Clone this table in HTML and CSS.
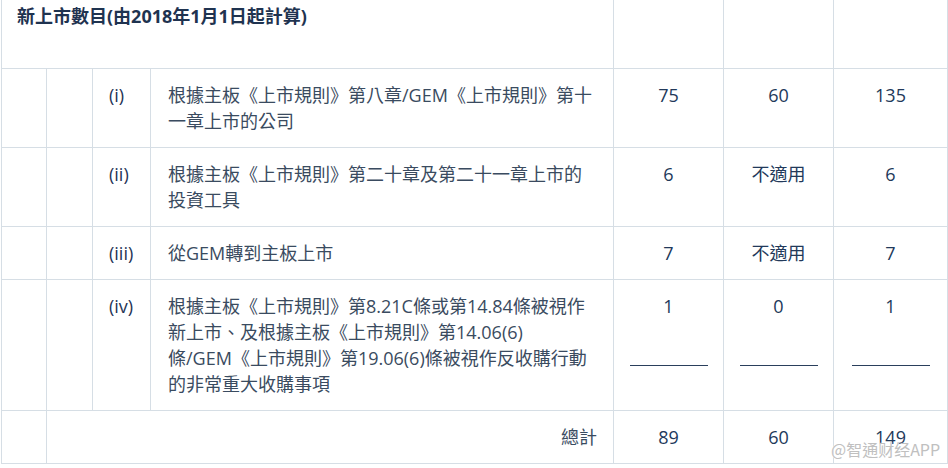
FILE: index.html
```html
<!DOCTYPE html>
<html lang="zh-Hant">
<head>
<meta charset="utf-8">
<title>新上市數目</title>
<link rel="stylesheet" href="styles.css">
</head>
<body>
<div class="page">
  <div class="grid">
    <div class="cell title">新上市數目(由2018年1月1日起計算)</div>
    <div class="cell"></div>
    <div class="cell"></div>
    <div class="cell"></div>

    <div class="cell"></div>
    <div class="cell"></div>
    <div class="cell label">(i)</div>
    <div class="cell desc">根據主板《上市規則》第八章/GEM《上市規則》第十<br>一章上市的公司</div>
    <div class="cell num">75</div>
    <div class="cell num">60</div>
    <div class="cell num">135</div>

    <div class="cell"></div>
    <div class="cell"></div>
    <div class="cell label">(ii)</div>
    <div class="cell desc">根據主板《上市規則》第二十章及第二十一章上市的<br>投資工具</div>
    <div class="cell num">6</div>
    <div class="cell num">不適用</div>
    <div class="cell num">6</div>

    <div class="cell"></div>
    <div class="cell"></div>
    <div class="cell label">(iii)</div>
    <div class="cell desc">從GEM轉到主板上市</div>
    <div class="cell num">7</div>
    <div class="cell num">不適用</div>
    <div class="cell num">7</div>

    <div class="cell"></div>
    <div class="cell"></div>
    <div class="cell label">(iv)</div>
    <div class="cell desc">根據主板《上市規則》第8.21C條或第14.84條被視作<br>新上市、及根據主板《上市規則》第14.06(6)<br>條/GEM《上市規則》第19.06(6)條被視作反收購行動<br>的非常重大收購事項</div>
    <div class="cell num">1<div class="rule"></div></div>
    <div class="cell num">0<div class="rule"></div></div>
    <div class="cell num">1<div class="rule"></div></div>

    <div class="cell"></div>
    <div class="cell total-label">總計</div>
    <div class="cell num">89</div>
    <div class="cell num">60</div>
    <div class="cell num">149</div>
  </div>
  <div class="watermark">@智通财经APP</div>
</div>
</body>
</html>
```

FILE: styles.css
```css
html, body {
  margin: 0;
  padding: 0;
  background: #ffffff;
}

.page {
  position: relative;
  width: 948px;
  height: 468px;
  overflow: hidden;
  font-family: "Open Sans", "Noto Sans CJK TC", sans-serif;
  font-size: 18px;
  line-height: 26px;
  color: #2d4058;
}

.grid {
  margin-left: 1px;
  width: 945px;
  display: grid;
  grid-template-columns: 44px 45px 57px 462px 109px 109px 113px;
  grid-template-rows: 68px 78px 78px 52px 130px 52px;
  gap: 1px;
  padding: 0 1px 1px 1px;
  background: #d6dee5;
}

.cell {
  background: #ffffff;
  padding-top: 13px;
}

.title {
  grid-column: 1 / span 4;
  padding: 3px 0 0 15px;
  font-weight: 700;
  color: #1f3350;
}

.label {
  padding-left: 16px;
  color: #1f3456;
  font-weight: 500;
}

.desc {
  padding-left: 17px;
  color: #3a4b60;
}

.num {
  text-align: center;
  color: #22395a;
}

.total-label {
  grid-column: 2 / span 3;
  text-align: right;
  padding-right: 16px;
  color: #3a4b60;
}

.rule {
  width: 78px;
  height: 0;
  margin: 46px auto 0;
  border-top: 1px solid #2a3f5c;
}

.watermark {
  position: absolute;
  left: 831px;
  top: 438px;
  font-family: "Noto Sans CJK SC", sans-serif;
  font-size: 16px;
  line-height: 22px;
  color: #c0c0c0;
  text-shadow: 0 0 1px #ffffff, 0 0 1px #ffffff;
}
```
